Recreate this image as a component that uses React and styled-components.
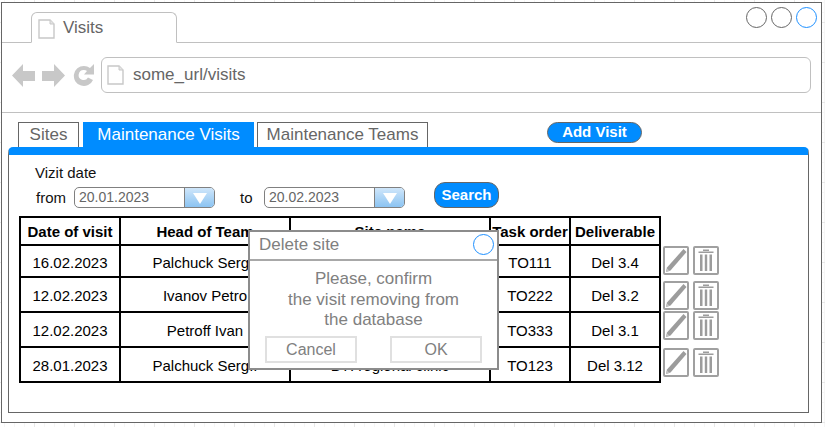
import React from "react";
import styled, { createGlobalStyle } from "styled-components";

const Global = createGlobalStyle`
  html, body { margin: 0; padding: 0; }
  body {
    width: 825px; height: 427px; overflow: hidden;
    font-family: "Liberation Sans", Arial, sans-serif;
    background-color: #fff;
    background-image:
      linear-gradient(to right, #e8e8e8 1px, transparent 1px),
      linear-gradient(to bottom, #e8e8e8 1px, transparent 1px),
      linear-gradient(to right, #f6f6f6 1px, transparent 1px),
      linear-gradient(to bottom, #f6f6f6 1px, transparent 1px);
    background-size: 40px 40px, 40px 40px, 10px 10px, 10px 10px;
    background-position: 34px 22px, 34px 22px, 4px 2px, 4px 2px;
  }
`;

const Page = styled.div`padding: 2px 3px 0 1px; width: 825px; height: 427px; box-sizing: border-box;`;
const Win = styled.div`
  width: 821px; height: 421px; box-sizing: border-box;
  border: 1px solid #666; background: #fff; position: relative;
`;
const TabBar = styled.div`
  height: 40px; box-sizing: border-box; border-bottom: 1px solid #c0c0c0;
  padding: 9px 4px 0 29px; display: flex; justify-content: space-between;
`;
const BrowserTab = styled.div`
  width: 146px; height: 31px; box-sizing: border-box;
  border: 1px solid #c0c0c0; border-bottom: 1px solid #fff; border-radius: 6px 6px 0 0;
  display: flex; align-items: center; gap: 8px; padding: 0 0 0 6px;
  color: #666; font-size: 17px; background: #fff;
`;
const TabIcon = styled.span`display: flex; margin-top: 2px;`;
const Dots = styled.div`display: flex; gap: 4px; margin-top: -5px; height: 21px;`;
const Dot = styled.span`
  width: 21px; height: 21px; box-sizing: border-box; border-radius: 50%;
  border: 1px solid ${p => p.$blue ? "#1e90ff" : "#666"}; background: #fff;
`;
const Toolbar = styled.div`
  height: 70px; box-sizing: border-box; border-bottom: 1px solid #c0c0c0;
  display: flex; align-items: flex-start; padding: 14px 9px 0 10px;
`;
const NavIcons = styled.svg`margin-top: 7px; flex: none;`;
const Address = styled.div`
  width: 710px; height: 36px; box-sizing: border-box; margin-left: 4px;
  border: 1px solid #c0c0c0; border-radius: 6px;
  display: flex; align-items: center; gap: 9px; padding: 0 0 0 5px;
  color: #666; font-size: 17px;
`;
const Content = styled.div`padding: 9px 0 0 6px;`;
const TabRow = styled.div`display: flex; align-items: flex-start; height: 25px; padding-left: 10px; position: relative; z-index: 1;`;
const PageTab = styled.div`
  height: 25px; box-sizing: border-box; width: ${p => p.$w}px; margin-right: ${p => p.$mr}px;
  display: flex; align-items: center; justify-content: center; font-size: 17px;
  border: 1px solid ${p => p.$active ? "#008cff" : "#666"};
  border-bottom: none;
  color: ${p => p.$active ? "#fff" : "#666"};
  background: ${p => p.$active ? "#008cff" : "#fff"};
`;
const PillButton = styled.div`
  width: ${p => p.$w}px; height: ${p => p.$h}px; box-sizing: border-box;
  background: #008cff; border: 1px solid #666; border-radius: ${p => p.$r}px;
  color: #fff; font-weight: bold; font-size: 15px;
  display: flex; align-items: center; justify-content: center;
  margin-left: ${p => p.$ml}px; margin-top: ${p => p.$mt}px; padding-bottom: 2px;
`;
const Panel = styled.div`
  width: 801px; height: 266px; box-sizing: border-box;
  border: 1px solid #666; border-top: 8px solid #008cff; border-radius: 5px 5px 0 0;
  padding: 9px 0 0 10px;
`;
const FilterLabel = styled.div`font-size: 15px; line-height: 18px; color: #111; padding-left: 16px;`;
const FilterRow = styled.div`display: flex; align-items: flex-start; height: 34px; font-size: 15px; color: #111;`;
const FromLabel = styled.span`width: 55px; padding: 7px 0 0 17px; box-sizing: border-box; line-height: 18px;`;
const ToLabel = styled.span`width: 49px; padding: 7px 0 0 25px; box-sizing: border-box; line-height: 18px;`;
const DateField = styled.div`
  width: 141px; height: 21px; box-sizing: border-box; margin-top: 5px;
  border: 1px solid #808080; border-radius: 5px; overflow: hidden; display: flex;
`;
const DateValue = styled.div`flex: 1; color: #666; font-size: 14px; line-height: 18px; padding-left: 4px;`;
const DateBtn = styled.div`
  width: 29px; border-left: 1px solid #808080;
  background: linear-gradient(to bottom, #cfe6fa, #8cc4f2);
  display: flex; align-items: center; justify-content: center;
`;
const Arrow = styled.span`
  width: 0; height: 0; margin-top: 2px;
  border-left: 7px solid transparent; border-right: 7px solid transparent; border-top: 11px solid #fff;
`;
const TableRow = styled.div`display: flex; align-items: flex-start;`;
const Table = styled.table`
  border-collapse: collapse; table-layout: fixed; width: 642px;
  border: 2px solid #000; font-size: 15px; color: #000; flex: none; background: #fff;
`;
const Th = styled.th`
  box-sizing: border-box; width: ${p => p.$w}px; border: 2px solid #000; padding: 0;
  font-size: 15px; font-weight: bold; height: 28px; white-space: nowrap;
`;
const Td = styled.td`
  box-sizing: border-box; border: 2px solid #000; padding: 2px 0 0; text-align: center;
  height: ${p => p.$h}px; white-space: nowrap;
`;
const Actions = styled.div`display: flex; flex-direction: column; margin-left: 2px; padding-top: 30px;`;
const ActionRow = styled.div`display: flex; gap: 4px; margin-top: ${p => p.$mt}px;`;
const IconBox = styled.div`
  width: 26px; height: 29px; box-sizing: border-box; border: 2px solid #a0a0a0; border-radius: 2px;
  display: flex; align-items: center; justify-content: center; background: #fff;
`;
const Dialog = styled.div`
  position: absolute; left: 246px; top: 227px; width: 251px; height: 140px; box-sizing: border-box;
  border: 2px solid #8c8c8c; background: #fff; color: #808080; z-index: 2;
`;
const DialogHead = styled.div`
  height: 29px; box-sizing: border-box; border-bottom: 2px solid #a8a8a8;
  display: flex; align-items: center; justify-content: space-between;
  padding: 0 3px 2px 9px; font-size: 17px; color: #808080;
`;
const DialogDot = styled.span`width: 21px; height: 21px; box-sizing: border-box; border: 1px solid #1e90ff; border-radius: 50%;`;
const DialogBody = styled.div`text-align: center; font-size: 17px; line-height: 20.5px; padding-top: 8px; height: 69px; box-sizing: border-box;`;
const DialogButtons = styled.div`display: flex; justify-content: space-between; padding: 6px 15px 0 15px;`;
const DialogButton = styled.div`
  width: 92px; height: 27px; box-sizing: border-box; border: 2px solid #e0e0e0;
  display: flex; align-items: center; justify-content: center; font-size: 16px; color: #808080;
`;

const DocIcon = ({ w = 17, h = 20 }) => (
  <svg width={w} height={h} viewBox="0 0 17 20" style={{ flex: "none" }}>
    <path d="M1 1H12L16 5V19H1Z" fill="#fff" stroke="#c8c8c8" strokeWidth="1.4" />
    <path d="M12 1V5H16" fill="#e4e4e4" stroke="#c8c8c8" strokeWidth="1" />
  </svg>
);

const Pencil = () => (
  <svg width="22" height="25" viewBox="0 0 22 25">
    <path d="M1 24 L2 19.500 L18.500 1 L21.500 4 L5.500 22.500 Z" fill="#9c9c9c" />
    <path d="M1 24 L2 20.500 L4.500 23 Z" fill="#c4c4c4" />
  </svg>
);
const Trash = () => (
  <svg width="22" height="25" viewBox="0 0 22 25">
    <path d="M3.500 3.500H18.500V5H3.500ZM8 1.500H14V3H8Z" fill="#9c9c9c" />
    <path d="M5 6.500H7.500V23H5ZM9.800 6.500H12.200V23H9.800ZM14.500 6.500H17V23H14.500Z" fill="#9c9c9c" />
  </svg>
);

const rows = [
  ["16.02.2023", "Palchuck Serg..", "Site 1", "TO111", "Del 3.4", 32],
  ["12.02.2023", "Ivanov Petro", "Site 2", "TO222", "Del 3.2", 35],
  ["12.02.2023", "Petroff Ivan", "Site 3", "TO333", "Del 3.1", 35],
  ["28.01.2023", "Palchuck Serg..", "BTI regional clinic", "TO123", "Del 3.12", 35],
];

export default function App() {
  return (
    <>
      <Global />
      <Page>
        <Win>
          <TabBar>
            <BrowserTab><TabIcon><DocIcon /></TabIcon>Visits</BrowserTab>
            <Dots><Dot /><Dot /><Dot $blue /></Dots>
          </TabBar>
          <Toolbar>
            <NavIcons width="85" height="24" viewBox="0 0 85 24">
              <path d="M0 11.500L11 0V7H23V17H11V23Z" fill="#c8c8c8" />
              <path d="M53 11.500L42 0V7H30V17H42V23Z" fill="#c8c8c8" />
              <path d="M72 2a10 10 0 1 0 9 14l-5-2.500a5 5 0 1 1-4-7.500a5 5 0 0 1 3 1l-3 3.500H82V0l-4 4a10 10 0 0 0-6-2Z" fill="#c8c8c8" />
            </NavIcons>
            <Address><DocIcon />some_url/visits</Address>
          </Toolbar>
          <Content>
            <TabRow>
              <PageTab $w={61} $mr={4}>Sites</PageTab>
              <PageTab $w={171} $mr={3} $active>Maintenance Visits</PageTab>
              <PageTab $w={171} $mr={0}>Maintenance Teams</PageTab>
              <PillButton $w={95} $h={21} $r={11} $ml={119} $mt={0}>Add Visit</PillButton>
            </TabRow>
            <Panel>
              <FilterLabel>Vizit date</FilterLabel>
              <FilterRow>
                <FromLabel>from</FromLabel>
                <DateField><DateValue>20.01.2023</DateValue><DateBtn><Arrow /></DateBtn></DateField>
                <ToLabel>to</ToLabel>
                <DateField><DateValue>20.02.2023</DateValue><DateBtn><Arrow /></DateBtn></DateField>
                <PillButton $w={65} $h={26} $r={11} $ml={29} $mt={0}>Search</PillButton>
              </FilterRow>
              <TableRow>
                <Table>
                  <thead>
                    <tr>
                      <Th $w={100}>Date of visit</Th>
                      <Th $w={170}>Head of Team</Th>
                      <Th $w={200}>Site name</Th>
                      <Th $w={80}>Task order</Th>
                      <Th $w={90}>Deliverable</Th>
                    </tr>
                  </thead>
                  <tbody>
                    {rows.map((r, i) => (
                      <tr key={i}>
                        <Td $h={r[5]}>{r[0]}</Td>
                        <Td $h={r[5]}>{r[1]}</Td>
                        <Td $h={r[5]}>{r[2]}</Td>
                        <Td $h={r[5]}>{r[3]}</Td>
                        <Td $h={r[5]}>{r[4]}</Td>
                      </tr>
                    ))}
                  </tbody>
                </Table>
                <Actions>
                  {[0, 6, 1, 8].map((m, i) => (
                    <ActionRow key={i} $mt={m}>
                      <IconBox><Pencil /></IconBox>
                      <IconBox><Trash /></IconBox>
                    </ActionRow>
                  ))}
                </Actions>
              </TableRow>
            </Panel>
          </Content>
          <Dialog>
            <DialogHead>Delete site<DialogDot /></DialogHead>
            <DialogBody>Please, confirm<br />the visit removing from<br />the database</DialogBody>
            <DialogButtons>
              <DialogButton>Cancel</DialogButton>
              <DialogButton>OK</DialogButton>
            </DialogButtons>
          </Dialog>
        </Win>
      </Page>
    </>
  );
}
